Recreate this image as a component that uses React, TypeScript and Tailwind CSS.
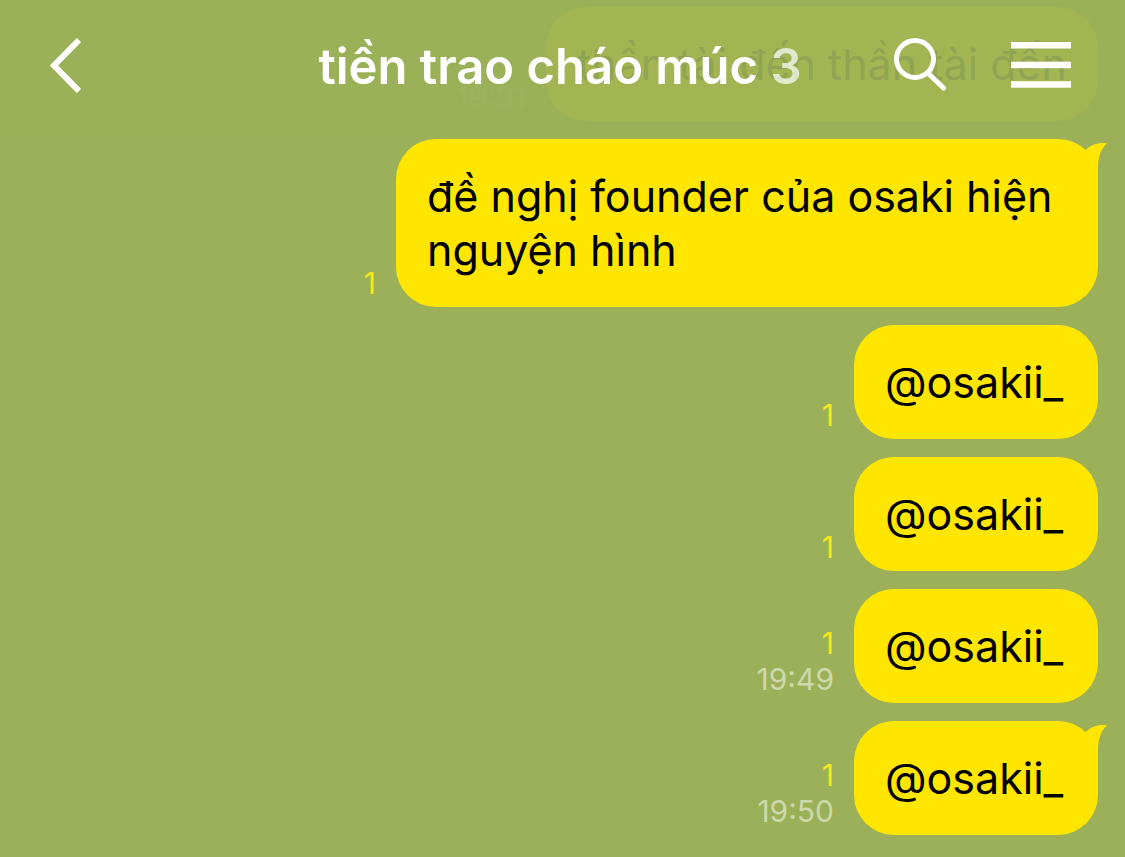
import React from 'react';
import { clsx } from 'clsx';

interface Message {
  id: number;
  text: string;
  unread?: number;
  time?: string;
  hasTail?: boolean;
}

const messages: Message[] = [
  { id: 1, text: 'thần tài đến thần tài đến', time: '19:31' },
  { id: 2, text: 'đề nghị founder của osaki hiện nguyện hình', unread: 1, hasTail: true },
  { id: 3, text: '@osakii_', unread: 1 },
  { id: 4, text: '@osakii_', unread: 1 },
  { id: 5, text: '@osakii_', unread: 1, time: '19:49' },
  { id: 6, text: '@osakii_', unread: 1, time: '19:50', hasTail: true },
];

const BackIcon = () => (
  <svg width="32" height="56" viewBox="0 0 32 56" fill="none" stroke="currentColor" strokeWidth="6">
    <path d="M30 3 5 28.500l25 25.500" />
  </svg>
);

const SearchIcon = () => (
  <svg width="53" height="54" viewBox="0 0 53 54" fill="none" stroke="currentColor" strokeWidth="5">
    <circle cx="21" cy="21" r="18.500" />
    <path d="M35 36 49.500 50" strokeLinecap="round" />
  </svg>
);

const MenuIcon = () => (
  <svg width="60" height="46" viewBox="0 0 60 46" fill="currentColor">
    <rect width="60" height="6.500" />
    <rect y="19.700" width="60" height="6.500" />
    <rect y="39.200" width="60" height="6.500" />
  </svg>
);

const ChatHeader = ({ title, members }: { title: string; members: number }) => (
  <header className="absolute inset-x-0 top-0 z-10 grid h-[138px] grid-cols-[1fr_auto_1fr] items-center bg-[#9bb058]/93 pr-[54px] pb-2 pl-[49px] text-white">
    <button type="button" aria-label="Back" className="justify-self-start">
      <BackIcon />
    </button>
    <h1 className="pt-1 text-[49px] leading-[60px] font-semibold whitespace-nowrap">
      {title} <span className="text-white/70">{members}</span>
    </h1>
    <div className="flex items-center gap-16 justify-self-end">
      <button type="button" aria-label="Search">
        <SearchIcon />
      </button>
      <button type="button" aria-label="Menu">
        <MenuIcon />
      </button>
    </div>
  </header>
);

const MessageRow = ({ message }: { message: Message }) => (
  <li className="flex items-end justify-end gap-5">
    {/* Unread count and time */}
    <div className="shrink-0 pb-[6px] text-right text-[30px] leading-9">
      {message.unread && <div className="text-[#f5e81c]">{message.unread}</div>}
      {message.time && (
        <time className={clsx('block', message.unread ? 'text-[#cdd8ac]' : 'text-[#cdd8ac]/60')}>
          {message.time}
        </time>
      )}
    </div>

    {/* Bubble */}
    <div className="relative max-w-[702px] min-w-[244px] rounded-[40px] bg-[#ffe600] px-[31px] py-[30px] text-[43px] leading-[54px] text-black">
      {message.text}
      {message.hasTail && (
        <svg className="absolute top-1 -right-[9px]" width="22" height="38" viewBox="0 0 22 38" fill="#ffe600">
          <path d="M0 8C5 2 12 -0.500 22 0.200C16 6 13 14 13 24V38L0 24Z" />
        </svg>
      )}
    </div>
  </li>
);

const App: React.FC = () => {
  return (
    <main className="relative min-h-screen bg-[#9bb058] font-['Inter',sans-serif]">
      <ChatHeader title="tiền trao cháo múc" members={3} />
      <ul className="flex flex-col gap-[18px] pt-[7px] pr-[27px] pb-[22px] pl-6">
        {messages.map((message) => (
          <MessageRow key={message.id} message={message} />
        ))}
      </ul>
    </main>
  );
};

export default App;
